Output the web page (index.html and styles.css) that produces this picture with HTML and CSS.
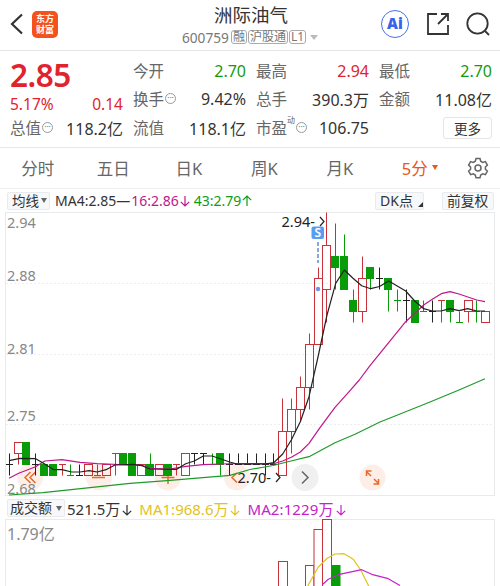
FILE: index.html
```html
<!DOCTYPE html>
<html lang="zh-CN">
<head>
    <meta charset="UTF-8">
    <meta name="viewport" content="width=device-width, initial-scale=1.0">
    <title>洲际油气 600759</title>
    <link rel="stylesheet" href="styles.css">
</head>
<body>
    <header class="header">
        <div class="header-left">
            <svg class="back" width="14" height="24" viewBox="0 0 14 24"><path d="M12 2.500 2 12l10 9.500"/></svg>
            <div class="logo">东方<br>财富</div>
        </div>
        <div class="title">
            <h1>洲际油气</h1>
            <div class="code">600759<span class="tag first">融</span><span class="tag">沪股通</span><span class="tag">L1</span><i class="caret"></i></div>
        </div>
        <div class="header-right">
            <div class="ai">Ai</div>
            <svg width="24" height="24" viewBox="0 0 24 24"><path d="M11 2H2v20h20v-9M12 12 22 2M15 2h7v7"/></svg>
            <svg width="24" height="24" viewBox="0 0 24 24"><circle cx="11.500" cy="11.500" r="10.200"/><path d="m19 19 4 4"/></svg>
        </div>
    </header>

    <section class="quote">
        <div class="col">
            <div class="price red">2.85</div>
            <div class="cell change red"><span>5.17%</span><span>0.14</span></div>
            <div class="cell"><label>总值<i class="more-dot">···</i></label><span>118.2亿</span></div>
        </div>
        <div class="col">
            <div class="cell"><label>今开</label><span class="green">2.70</span></div>
            <div class="cell"><label>换手<i class="more-dot">···</i></label><span>9.42%</span></div>
            <div class="cell"><label>流值</label><span>118.1亿</span></div>
        </div>
        <div class="col">
            <div class="cell"><label>最高</label><span class="red">2.94</span></div>
            <div class="cell"><label>总手</label><span>390.3万</span></div>
            <div class="cell"><label>市盈<sup>动</sup><i class="more-dot pe">···</i></label><span>106.75</span></div>
        </div>
        <div class="col">
            <div class="cell"><label>最低</label><span class="green">2.70</span></div>
            <div class="cell"><label>金额</label><span>11.08亿</span></div>
            <div class="cell end"><button class="more">更多</button></div>
        </div>
    </section>

    <nav class="tabs">
        <span>分时</span>
        <span>五日</span>
        <span>日K</span>
        <span>周K</span>
        <span>月K</span>
        <span class="active">5分<i class="caret"></i></span>
        <svg class="gear" width="22" height="22" viewBox="0 0 22 22"><path d="M9 1.500h4l.7 2.700 2 1.200 2.700-.8 2 3.500-2 1.900v2.200l2 1.900-2 3.500-2.700-.8-2 1.200-.7 2.700H9l-.7-2.700-2-1.200-2.700.8-2-3.500 2-1.900V10l-2-1.900 2-3.500 2.700.8 2-1.200z"/><circle cx="11" cy="11.100" r="3"/></svg>
    </nav>

    <div class="indicators">
        <span class="chip ma">均线<i class="caret"></i></span>
        <span class="ma4">MA4:2.85—</span>
        <span class="ma16">16:2.86<svg class="arrow" viewBox="0 0 10 12"><path d="M5 1v10M.8 6.800 5 11l4.200-4.200"/></svg></span>
        <span class="ma43">43:2.79<svg class="arrow" viewBox="0 0 10 12"><path d="M5 11V1M.8 5.200 5 1l4.200 4.200"/></svg></span>
        <span class="chip dk">DK点<i class="corner"></i></span>
        <span class="chip fq">前复权</span>
    </div>

    <svg class="kline" width="500" height="285" viewBox="0 212 500 285">
        <g class="grid">
            <path class="frame" d="M5 212.500h490M5.500 212v283M494.500 212v283M5 495.500h490"/>
            <path class="dots" d="M6 283.500h488M6 354.500h488M6 424.500h488"/>
        </g>
        <g class="tools">
            <circle cx="30" cy="477.500" r="13"/>
            <circle cx="99" cy="477.500" r="13"/>
            <circle cx="168" cy="477.500" r="13"/>
            <circle cx="237" cy="477.500" r="13"/>
            <circle class="next" cx="305" cy="477.500" r="13.500"/>
            <circle cx="372.500" cy="477.500" r="13"/>
            <path d="m30.500 472-5.500 5.500 5.500 5.500M35.500 472l-5.500 5.500 5.500 5.500M92 477.500h13M161.500 477.500h13M168 471v13M237 473l-5 4.500 5 5"/>
            <path d="m371 476-4.800-4.800M366.500 476v-5h5M374 479l4.800 4.800M378.500 479v5h-5"/>
            <path class="next-arrow" d="m302 471.500 6 6-6 6"/>
        </g>
        <g class="scale">
            <text x="7" y="227.500">2.94</text>
            <text x="7" y="281">2.88</text>
            <text x="7" y="354">2.81</text>
            <text x="7" y="421">2.75</text>
            <text x="7" y="493.500">2.68</text>
        </g>
        <g id="candles"></g>
        <g id="lines"></g>
        <g class="marks">
            <text x="281.500" y="227">2.94-</text>
            <path d="m320 217 4 4.500-4 4.500"/>
            <text x="237.500" y="482.500">2.70-</text>
            <path d="m276 473 4 4.500-4 4.500"/>
        </g>
        <g class="sell">
            <path d="M318 242v21"/>
            <rect x="311.500" y="226.500" width="12.500" height="12.500" rx="2"/>
            <circle cx="318" cy="289" r="2.200"/>
            <text x="317.800" y="237.200">S</text>
        </g>
    </svg>

    <div class="volume-bar">
        <span class="chip vol">成交额<i class="caret"></i></span>
        <span class="v0">521.5万<svg class="arrow" viewBox="0 0 10 12"><path d="M5 1v10M.8 6.800 5 11l4.200-4.200"/></svg></span>
        <span class="v1">MA1:968.6万<svg class="arrow" viewBox="0 0 10 12"><path d="M5 1v10M.8 6.800 5 11l4.200-4.200"/></svg></span>
        <span class="v2">MA2:1229万<svg class="arrow" viewBox="0 0 10 12"><path d="M5 1v10M.8 6.800 5 11l4.200-4.200"/></svg></span>
    </div>

    <svg class="volume" width="500" height="67" viewBox="0 519 500 67">
        <path class="frame" d="M5 519.500h490M5.500 519v67M494.500 519v67"/>
        <text class="scale amount" x="7" y="540">1.79亿</text>
        <g class="up">
            <rect x="278.500" y="561.500" width="9" height="40"/>
            <rect x="305.500" y="565.500" width="8.500" height="40"/>
            <rect x="314" y="529.500" width="8.500" height="70"/>
            <rect x="322.500" y="519.500" width="9" height="70"/>
        </g>
        <rect class="down" x="331.500" y="565.500" width="8.500" height="30"/>
        <polyline class="line yellow" points="307.700,586 318.300,567 327.300,558.300 335,554 344,553.700 353.300,559.300 360.700,570 368.700,586"/>
        <polyline class="line purple" points="322.300,584.700 328.300,579.300 338.300,574.700 361.700,569.700 371.700,574.300 388.300,578.700 400,585.500"/>
    </svg>

    <script src="chart.js"></script>
</body>
</html>
```
FILE: styles.css
```css
* {
    box-sizing: border-box;
}
body {
    margin: 0;
    width: 500px;
    height: 586px;
    overflow: hidden;
    background: #fff;
    color: #333;
    font-family: "Noto Sans", "Noto Sans CJK SC", sans-serif;
    font-size: 16px;
}
i {
    font-style: normal;
}
svg {
    display: block;
    fill: none;
}
.red {
    color: #e0232e;
}
.green {
    color: #109c10;
}
.caret {
    display: inline-block;
    border: 3px solid transparent;
    border-top: 5px solid currentColor;
    border-bottom: 0;
}

/* header */
.header {
    display: grid;
    grid-template-columns: 150px 1fr 150px;
    height: 51px;
    border-bottom: 1px solid #e2e5e6;
}
.header-left {
    display: flex;
    align-items: center;
    gap: 8px;
    padding-left: 10px;
    padding-bottom: 2px;
}
.back {
    stroke: #333;
    stroke-width: 2.200;
}
.logo {
    width: 26px;
    height: 27px;
    padding-top: 2px;
    border-radius: 5px;
    background: #f4521c;
    color: #fff;
    font: 700 9px/11.500px "Noto Sans CJK SC", sans-serif;
    text-align: center;
}
.title {
    display: flex;
    flex-direction: column;
    align-items: center;
}
.title h1 {
    margin: 3px 0 0;
    font-size: 18.500px;
    font-weight: 400;
    line-height: 24px;
    padding-left: 2px;
}
.code {
    display: flex;
    align-items: center;
    gap: 1px;
    height: 20px;
    color: #777;
    font-size: 13.700px;
    white-space: nowrap;
}
.tag {
    height: 14px;
    padding: 0 1px;
    border: 1px solid #aaa;
    border-radius: 3px;
    font-size: 12px;
    line-height: 12px;
}
.tag.first {
    margin-left: 1px;
}
.code .caret {
    margin-left: 3px;
    border-width: 5px 4px 0;
    color: #bbb;
}
.header-right {
    display: flex;
    align-items: center;
    justify-content: flex-end;
    gap: 16.500px;
    padding-right: 10px;
    padding-bottom: 2px;
    stroke: #333;
    stroke-width: 1.800;
}
.ai {
    width: 28px;
    height: 28px;
    border: 1.500px solid #4a6ee8;
    border-radius: 50%;
    color: #3b63ea;
    font-size: 15px;
    font-weight: 900;
    line-height: 25px;
    text-align: center;
}

/* quote */
.quote {
    display: grid;
    grid-template-columns: repeat(4, 113px);
    gap: 10px;
    height: 97px;
    padding: 6px 0 0 10px;
    border-bottom: 1px solid #e6e8ea;
}
.col {
    display: flex;
    flex-direction: column;
}
.cell {
    display: flex;
    align-items: center;
    justify-content: space-between;
    height: 29px;
    white-space: nowrap;
}
.cell:first-child {
    height: 27px;
}
.cell label {
    display: flex;
    align-items: center;
    color: #666;
    font-size: 15.500px;
}
.price {
    height: 34px;
    font-size: 31.500px;
    font-weight: 600;
    line-height: 36px;
    letter-spacing: -0.500px;
}
.cell.change {
    height: 22px;
    padding-top: 4px;
    font-size: 15.500px;
}
.cell.end {
    justify-content: flex-end;
}
.more-dot {
    width: 11px;
    height: 11px;
    margin-left: 1px;
    border: 1px solid #999;
    border-radius: 50%;
    color: #888;
    font-size: 9px;
    line-height: 8px;
    letter-spacing: -0.200px;
    text-align: center;
}
.cell sup {
    align-self: flex-start;
    font-size: 8px;
    line-height: 8px;
}
.more {
    width: 49px;
    height: 22px;
    padding: 0;
    border: 1px solid #e4e4e4;
    border-radius: 3px;
    background: #fff;
    color: #333;
    font: 13.500px/18px "Noto Sans CJK SC", sans-serif;
}

/* period tabs */
.tabs {
    display: grid;
    grid-template-columns: repeat(5, 75.500px) 78.500px 44px;
    align-items: center;
    height: 41px;
    border-bottom: 1px solid #f0f0f0;
    color: #666;
    font-size: 16.500px;
    text-align: center;
}
.tabs .active {
    padding-left: 6px;
    color: #e8581a;
}
.tabs .active .caret {
    margin-left: 4px;
    vertical-align: 5px;
}
.gear {
    margin-left: 11px;
    stroke: #666;
    stroke-width: 1.500;
}

/* indicator row */
.indicators,
.volume-bar {
    display: flex;
    align-items: center;
    white-space: nowrap;
}
.indicators {
    height: 23px;
    padding: 0 6px 0 7px;
    font-size: 14px;
}
.chip {
    display: flex;
    align-items: center;
    height: 18px;
    border: 1px solid #e8eaee;
    border-radius: 2px;
    background: #f7f8fa;
    color: #333;
    font-size: 14px;
    line-height: 16px;
}
.ma {
    width: 43px;
    padding-left: 4px;
    font-size: 13.500px;
}
.chip .caret {
    margin-left: 2px;
    color: #666;
}
.arrow {
    display: inline-block;
    width: 10px;
    height: 12px;
    margin-left: 1px;
    vertical-align: -1px;
    stroke: currentColor;
    stroke-width: 1.200;
}
.ma4 {
    margin-left: 5px;
}
.ma16 {
    margin-left: 1px;
    color: #c0168a;
}
.ma43 {
    margin-left: 4px;
    color: #109c10;
}
.dk {
    width: 49px;
    margin-left: auto;
    padding-left: 4px;
}
.corner {
    margin: 8px 0 0 5px;
    border-left: 5px solid transparent;
    border-bottom: 5px solid #333;
}
.fq {
    width: 52px;
    margin-left: 18px;
    padding-left: 4px;
    font-size: 13.800px;
}

/* charts */
.frame {
    stroke: #e8eaec;
}
.dots {
    stroke: #eee;
    stroke-dasharray: 2 2;
}
.scale {
    fill: #888;
    font-size: 14.500px;
}
.amount {
    font-size: 16px;
}
.tools {
    stroke: #e8692a;
    stroke-width: 1.500;
}
.tools circle {
    fill: #fdeee7;
    stroke: none;
}
.tools .next {
    fill: #f0f0f0;
}
.tools .next-arrow {
    stroke: #666;
}
.up {
    fill: #fff;
    stroke: #c8323a;
}
.kline .up rect {
    fill: none;
}
.down {
    fill: #089c08;
    stroke: #089c08;
}
.flat {
    stroke: #222;
}
.line {
    stroke-width: 1.200;
    stroke-linejoin: round;
}
.black {
    stroke: #222;
}
.magenta {
    stroke: #c0168a;
}
.long {
    stroke: #1f9a2a;
}
.yellow {
    stroke: #e2c21c;
}
.purple {
    stroke: #c423c8;
}
.marks text {
    fill: #222;
    font-size: 14.500px;
}
.marks path {
    stroke: #222;
    stroke-width: 1.200;
}
.sell path {
    stroke: #5a8fd8;
    stroke-width: 1.500;
    stroke-dasharray: 4 2;
}
.sell rect {
    fill: #5a9cf0;
}
.sell circle {
    fill: #6f94e4;
}
.sell text {
    fill: #fff;
    font-size: 12px;
    font-weight: 600;
    text-anchor: middle;
}

/* volume */
.volume-bar {
    height: 22px;
    padding-left: 7px;
    font-size: 15px;
}
.vol {
    width: 58px;
    padding-left: 2px;
}
.vol .caret {
    margin-left: 4px;
}
.volume-bar .arrow {
    margin-left: 2px;
}
.v0 {
    margin-left: 2px;
}
.v1 {
    margin-left: 7px;
    color: #e2c21c;
}
.v2 {
    margin-left: 7px;
    color: #c423c8;
    letter-spacing: 0.100px;
}
```
FILE: chart.js
```js
// [type, high, low, body top, body bottom], in ticks of 0.01 below 2.94
const candles = [
    ['flat', 22, 24, 23, 23], ['up', 21, 23, 21, 22], ['down', 21, 23, 21, 23],
    ['flat', 22, 24, 23, 23], ['down', 23, 24, 23, 24], ['down', 23, 24, 23, 24],
    ['up', 23, 24, 23, 23], ['down', 23, 24, 24, 24], ['flat', 23, 24, 24, 24],
    ['up', 23, 24, 23, 24], ['down', 23, 24, 24, 24], ['up', 23, 24, 23, 24],
    ['up', 22, 24, 22, 22], ['down', 22, 23, 22, 23], ['down', 22, 24, 22, 24],
    ['up', 23, 24, 23, 24], ['down', 22, 24, 23, 24], ['up', 23, 24, 23, 24],
    ['down', 23, 24, 23, 24], ['up', 23, 24, 23, 23], ['up', 22, 24, 22, 24],
    ['flat', 22, 23, 22, 22], ['flat', 22, 23, 22, 22], ['down', 22, 23, 23, 23],
    ['down', 22, 24, 22, 23], ['flat', 22, 24, 23, 23], ['flat', 22, 23, 23, 23],
    ['flat', 22, 23, 23, 23], ['flat', 22, 23, 23, 23], ['flat', 22, 24, 23, 23],
    ['flat', 22, 23, 23, 23], ['up', 17, 24, 20, 24], ['up', 17, 22, 18, 20],
    ['up', 15, 19, 16, 18], ['up', 11, 18, 12, 16], ['up', 5, 12, 6, 12],
    ['up', 0, 10, 3, 7], ['down', 1, 7, 4, 5], ['down', 2, 7, 4, 7],
    ['down', 7, 10, 8, 9], ['up', 4, 10, 6, 9], ['down', 5, 7, 5, 6],
    ['flat', 5, 7, 6, 6], ['down', 6, 9, 6, 7], ['down', 7, 9, 8, 8],
    ['flat', 7, 10, 8, 8], ['down', 8, 10, 8, 10], ['up', 8, 9, 9, 9],
    ['flat', 8, 10, 9, 9], ['up', 8, 10, 8, 8], ['down', 8, 10, 8, 9],
    ['down', 9, 10, 10, 10], ['up', 8, 10, 8, 9], ['down', 8, 10, 9, 9],
    ['up', 9, 10, 9, 10]
];

const lines = {
    long: '9,495 43,492.700 130,483.300 167,480.700 230,475.300 250,469.500 273,465.500 291,461 309,456.700 335,442.700 355,434.300 380,422 400,414 430,402 459,390 485,378.700',
    magenta: '9,478.300 18.700,473.300 35.700,466.700 44.700,461 62,459.700 80,462.300 97,463.700 130,465 142,465.300 150,468.300 170,469 186,466.300 203,464.700 220,464 240,463.500 273.700,463.700 282.700,461 291.300,457.300 300.300,452 309,443.300 320,427.700 335,407.300 350,390.700 359.300,380 370,365.700 405.700,321.700 423.700,305 432.300,299.300 441.300,293.700 450,291.700 459,294 476.700,300 485,301.700',
    black: '9,460.700 20,458.300 35.700,458.700 44.700,464 53.700,469.700 62,469.700 71.700,472 80,472 89,470.700 97.300,472 106,469.700 115,465 133,464.300 142,465.700 150,469 176.700,469.300 185.700,463.700 194.300,461 203.300,456 212,456 221,459 229.700,462 237,464 265,464 273.700,462.700 282.700,454 291.300,440 300.300,421.700 309,396.700 318,357 327,315 335.700,283.300 344.300,270 353,278.300 361.700,285.700 370.700,288.700 379.500,286.500 388.700,281 405.700,291 414.700,301 423.700,308.700 432.300,311 441,311 450,308.700 459,310.700 467.700,308.700 476.700,311 485,311'
};

const y = t => Math.round(212 + t * 10.96) + 0.5;

let html = '';
candles.forEach(([type, high, low, top, bottom], i) => {
    const x = Math.round(9.2 + i * 8.824 - 0.5) + 0.5;
    html += `<g class="${type}">`;
    if (top === bottom) {
        html += `<path d="M${x} ${y(high)}V${y(low)}M${x - 3.5} ${y(top)}h7"/>`;
    } else {
        html += `<path d="M${x} ${y(high)}V${y(top)}M${x} ${y(bottom)}V${y(low)}"/>`;
        html += `<rect x="${x - 4}" y="${y(top)}" width="${type === 'up' ? 8 : 7}" height="${y(bottom) - y(top)}"/>`;
    }
    html += '</g>';
});
document.getElementById('candles').innerHTML = html;

document.getElementById('lines').innerHTML = Object.keys(lines)
    .map(name => `<polyline class="line ${name}" points="${lines[name]}"/>`)
    .join('');
```
